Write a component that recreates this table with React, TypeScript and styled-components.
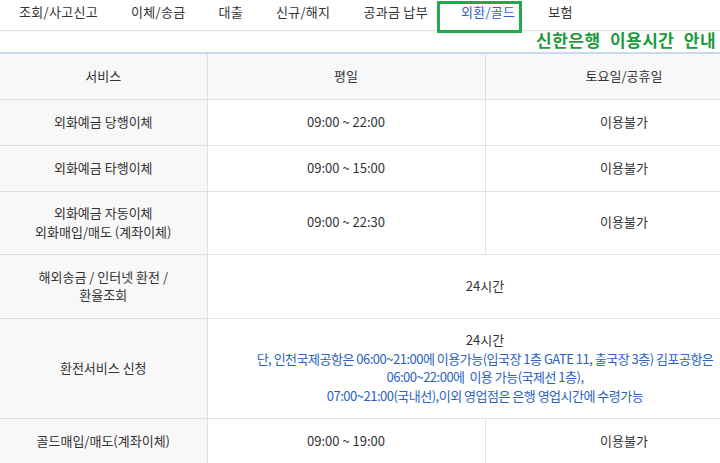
import React from "react";
import styled, { createGlobalStyle } from "styled-components";

const Global = createGlobalStyle`
  html, body { margin: 0; padding: 0; overflow: hidden; background: #ffffff; }
  body { font-family: "Noto Sans CJK KR", "Noto Sans", sans-serif; color: #333333; }
`;

const Page = styled.div`
  width: 720px;
  height: 463px;
  overflow: hidden;
  background: #ffffff;
`;

const Nav = styled.nav`
  position: relative;
  display: flex;
  align-items: flex-start;
  gap: 33px;
  height: 30px;
  padding-left: 19px;
  border-bottom: 1px solid #e3e3e3;
  box-shadow: 0 1px 1px rgba(0, 0, 0, 0.03);
`;

const NavItem = styled.a<{ $active?: boolean }>`
  font-size: 13px;
  line-height: 24px;
  letter-spacing: 0.3px;
  white-space: nowrap;
  color: ${(p) => (p.$active ? "#2a62c4" : "#333333")};
  text-decoration: none;
`;

const Highlight = styled.div`
  position: absolute;
  left: 437px;
  top: 1px;
  width: 85px;
  height: 32px;
  box-sizing: border-box;
  border: 3px solid #21a94b;
  pointer-events: none;
`;

const TitleRow = styled.div`
  height: 21px;
  padding-left: 536px;
  white-space: nowrap;
`;

const Title = styled.h2`
  margin: 0;
  font-size: 17px;
  line-height: 18px;
  font-weight: 700;
  letter-spacing: 0.5px;
  word-spacing: 5px;
  color: #1b9b3b;
`;

const Table = styled.table`
  width: 763px;
  table-layout: fixed;
  border-collapse: collapse;
  border-top: 2px solid #c9d9ee;
`;

const Row = styled.tr<{ $h: number }>`
  height: ${(p) => p.$h}px;
`;

const Cell = styled.td<{ $label?: boolean }>`
  padding: 0 10px;
  border: 1px solid #e0e0e0;
  border-left: none;
  text-align: center;
  vertical-align: middle;
  font-size: 13px;
  line-height: 18.5px;
  color: #333333;
  background: ${(p) => (p.$label ? "#f8f8f8" : "#ffffff")};
  & + & { border-left: 1px solid #e0e0e0; }
`;

const HeadCell = styled.th`
  padding: 0 10px;
  border: 1px solid #e0e0e0;
  border-top: none;
  border-left: none;
  text-align: center;
  vertical-align: middle;
  font-size: 13px;
  font-weight: 400;
  line-height: 18px;
  color: #333333;
  background: #f8f8f8;
  & + & { border-left: 1px solid #e0e0e0; }
`;

const Note = styled.span`
  display: block;
  color: #2a62c4;
  letter-spacing: -0.5px;
  white-space: nowrap;
`;

const Plain = styled.span`
  display: block;
`;

const navItems = ["조회/사고신고", "이체/송금", "대출", "신규/해지", "공과금 납부", "외환/골드", "보험"];

type R = { label: React.ReactNode; weekday: string; holiday: string; h: number };

const rows: R[] = [
  { label: "외화예금 당행이체", weekday: "09:00 ~ 22:00", holiday: "이용불가", h: 46 },
  { label: "외화예금 타행이체", weekday: "09:00 ~ 15:00", holiday: "이용불가", h: 46 },
  {
    label: (
      <>
        외화예금 자동이체
        <br />
        외화매입/매도 (계좌이체)
      </>
    ),
    weekday: "09:00 ~ 22:30",
    holiday: "이용불가",
    h: 63,
  },
];

export default function App() {
  return (
    <Page>
      <Global />
      <Nav>
        {navItems.map((n) => (
          <NavItem key={n} $active={n === "외환/골드"}>
            {n}
          </NavItem>
        ))}
        <Highlight />
      </Nav>
      <TitleRow>
        <Title>신한은행 이용시간 안내</Title>
      </TitleRow>
      <Table>
        <colgroup>
          <col style={{ width: 207 }} />
          <col style={{ width: 278 }} />
          <col style={{ width: 278 }} />
        </colgroup>
        <thead>
          <Row $h={46}>
            <HeadCell>서비스</HeadCell>
            <HeadCell>평일</HeadCell>
            <HeadCell>토요일/공휴일</HeadCell>
          </Row>
        </thead>
        <tbody>
          {rows.map((r, i) => (
            <Row key={i} $h={r.h}>
              <Cell $label>{r.label}</Cell>
              <Cell>{r.weekday}</Cell>
              <Cell>{r.holiday}</Cell>
            </Row>
          ))}
          <Row $h={64}>
            <Cell $label>
              해외송금 / 인터넷 환전 /
              <br />
              환율조회
            </Cell>
            <Cell colSpan={2}>
              <Plain>24시간</Plain>
            </Cell>
          </Row>
          <Row $h={100}>
            <Cell $label>환전서비스 신청</Cell>
            <Cell colSpan={2}>
              <Plain>24시간</Plain>
              <Note>단, 인천국제공항은 06:00~21:00에 이용가능(입국장 1층 GATE 11, 출국장 3층) 김포공항은</Note>
              <Note>06:00~22:00에&nbsp;&nbsp;이용 가능(국제선 1층),</Note>
              <Note>07:00~21:00(국내선),이외 영업점은 은행 영업시간에 수령가능</Note>
            </Cell>
          </Row>
          <Row $h={46}>
            <Cell $label>골드매입/매도(계좌이체)</Cell>
            <Cell>09:00 ~ 19:00</Cell>
            <Cell>이용불가</Cell>
          </Row>
        </tbody>
      </Table>
    </Page>
  );
}
